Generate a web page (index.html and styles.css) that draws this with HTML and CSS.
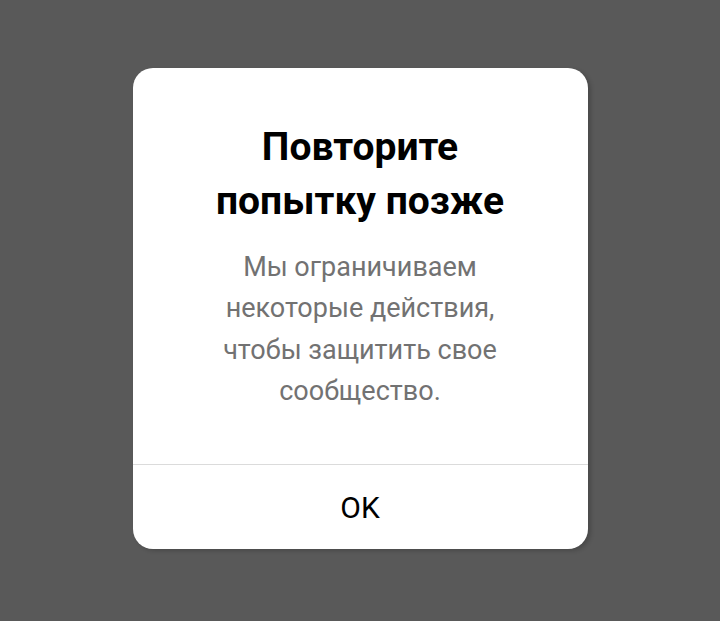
FILE: index.html
```html
<!DOCTYPE html>
<html lang="ru">
<head>
    <meta charset="UTF-8">
    <meta name="viewport" content="width=device-width, initial-scale=1.0">
    <title>Повторите попытку позже</title>
    <link rel="stylesheet" href="styles.css">
</head>
<body>
    <div class="overlay">
        <div class="dialog">
            <div class="dialog-content">
                <h1 class="dialog-title">Повторите попытку позже</h1>
                <p class="dialog-text">Мы ограничиваем некоторые действия, чтобы защитить свое сообщество.</p>
            </div>
            <button type="button" class="dialog-btn">OK</button>
        </div>
    </div>
</body>
</html>
```

FILE: styles.css
```css
* {
    box-sizing: border-box;
    font-family: Roboto, "Liberation Sans", Arial, sans-serif;
}

html, body {
    margin: 0;
    height: 100%;
}

body {
    background-color: #595959;
}

.overlay {
    display: flex;
    justify-content: center;
    padding-top: 68px;
}

.dialog {
    width: 455px;
    height: 481px;
    background-color: #fff;
    border-radius: 20px;
    box-shadow: 3px 2px 4px rgba(0, 0, 0, 0.18);
    display: flex;
    flex-direction: column;
    overflow: hidden;
}

.dialog-content {
    flex: 1;
    padding: 52px 60px 0;
    text-align: center;
}

.dialog-title {
    margin: 0;
    font-size: 39px;
    line-height: 54px;
    font-weight: 700;
    color: #000;
}

.dialog-text {
    margin: 19px 0 0;
    padding: 0 14px;
    font-size: 27px;
    line-height: 41.3px;
    color: #727272;
}

.dialog-btn {
    height: 85px;
    border: none;
    border-top: 1px solid #dbdbdb;
    background: none;
    font-size: 30px;
    color: #000;
    cursor: pointer;
}
```
